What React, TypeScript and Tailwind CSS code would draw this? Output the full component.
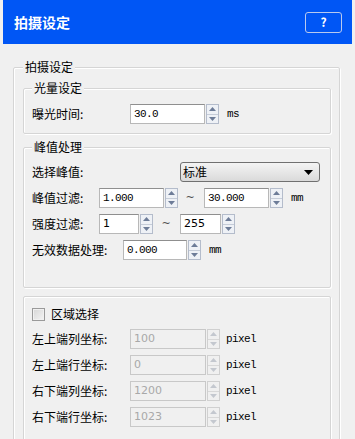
import type { ReactNode } from 'react';

const cjk = "font-['Noto_Sans_CJK_SC','Microsoft_YaHei',sans-serif]";

function Spinner({ disabled }: { disabled?: boolean }) {
  const arrow = disabled ? 'fill-[#c4c8cf]' : 'fill-[#6d7c98]';
  return (
    <div
      className={`ml-px flex h-[20px] w-[13px] flex-col border ${
        disabled ? 'border-[#d0d0d0] bg-[#f0f0f0]' : 'border-[#b4bccb] bg-[#eef1f6]'
      }`}
    >
      <div className="flex flex-1 items-center justify-center">
        <svg width="7" height="4" viewBox="0 0 7 4">
          <path d="M0 4 L3.5 0 L7 4 Z" className={arrow} />
        </svg>
      </div>
      <div className={`h-px ${disabled ? 'bg-[#d8d8d8]' : 'bg-[#c5ccd8]'}`} />
      <div className="flex flex-1 items-center justify-center">
        <svg width="7" height="4" viewBox="0 0 7 4">
          <path d="M0 0 L7 0 L3.5 4 Z" className={arrow} />
        </svg>
      </div>
    </div>
  );
}

function SpinBox({
  w,
  value,
  disabled,
  mono,
}: {
  w: string;
  value: string;
  disabled?: boolean;
  mono?: boolean;
}) {
  return (
    <div className="flex items-center">
      <div
        className={`flex h-[20px] items-center border pl-[3px] ${w} ${
          disabled
            ? 'border-[#c8c8c8] bg-[#f0f0f0] text-[#a8a8a8]'
            : 'border-[#b8b8b8] border-t-[#8f8f8f] bg-white text-black'
        } ${
          mono
            ? "font-['Liberation_Mono',monospace] text-[11px] tracking-[-0.6px]"
            : "font-['DejaVu_Sans',sans-serif] text-[11px]"
        }`}
      >
        {value}
      </div>
      <Spinner disabled={disabled} />
    </div>
  );
}

function Row({ label, lw, children }: { label: string; lw: string; children: ReactNode }) {
  return (
    <div className="flex h-[26px] items-center">
      <span className={`${lw} shrink-0 text-[12px] leading-[14px] text-black`}>{label}</span>
      {children}
    </div>
  );
}

function Unit({ children, ml }: { children: ReactNode; ml: string }) {
  return (
    <span className={`${ml} font-['Liberation_Mono',monospace] text-[11px] tracking-[-0.6px] text-black`}>
      {children}
    </span>
  );
}

function Tilde({ cls }: { cls: string }) {
  return (
    <span className={`${cls} w-[12px] text-center font-['DejaVu_Sans',sans-serif] text-[11px] text-[#505050]`}>
      ~
    </span>
  );
}

function Group({ title, className, children }: { title?: string; className: string; children: ReactNode }) {
  return (
    <fieldset
      className={`rounded-[2px] border border-[#d5d5d5] shadow-[inset_1px_1px_0_0_#ffffff,1px_1px_0_0_#ffffff] ${className}`}
    >
      {title && (
        <legend className="bg-[#f0f0f0] px-[2px] text-[12px] leading-[14px] text-black">{title}</legend>
      )}
      {children}
    </fieldset>
  );
}

export default function App() {
  return (
    <div className={`h-[439px] w-[355px] overflow-hidden bg-[#f0f0f0] ${cjk}`}>
      {/* Title bar */}
      <div className="mx-[3px] flex h-[44px] items-center justify-between bg-[#0056f5] pl-[11px] pr-[10px]">
        <span className="text-[14px] font-bold text-white">拍摄设定</span>
        <button className="flex h-[21px] w-[37px] items-center justify-center rounded-[3px] border border-[#b9c9ee] text-[12px] font-bold text-white">
          ?
        </button>
      </div>

      <div className="pl-[13px] pt-[16px]">
        <Group title="拍摄设定" className="w-[327px] pl-[9px] pr-[8px] pt-[7px] pb-[10px]">
          {/* 光量设定 */}
          <Group title="光量设定" className="px-[8px] pt-[6px] pb-[6px]">
            <Row label="曝光时间:" lw="w-[98px]">
              <SpinBox w="w-[75px]" value="30.0" mono />
              <Unit ml="ml-[8px]">ms</Unit>
            </Row>
          </Group>

          {/* 峰值处理 */}
          <Group title="峰值处理" className="mt-[6px] px-[8px] pt-[5px] pb-[24px]">
            <Row label="选择峰值:" lw="w-[148px]">
              <div className="flex h-[20px] w-[140px] items-center justify-between rounded-[3px] border border-[#707070] bg-gradient-to-b from-[#f4f4f4] to-[#dadada] pl-[2px] pr-[6px]">
                <span className="text-[12px] leading-[14px] text-black">标准</span>
                <svg width="9" height="5" viewBox="0 0 9 5">
                  <path d="M0 0 L9 0 L4.5 5 Z" fill="#000" />
                </svg>
              </div>
            </Row>
            <Row label="峰值过滤:" lw="w-[67px]">
              <SpinBox w="w-[65px]" value="1.000" mono />
              <Tilde cls="ml-[6px] mr-[8px]" />
              <SpinBox w="w-[65px]" value="30.000" mono />
              <Unit ml="ml-[8px]">mm</Unit>
            </Row>
            <Row label="强度过滤:" lw="w-[67px]">
              <SpinBox w="w-[40px]" value="1" />
              <Tilde cls="ml-[7px] mr-[8px]" />
              <SpinBox w="w-[41px]" value="255" />
            </Row>
            <Row label="无效数据处理:" lw="w-[91px]">
              <SpinBox w="w-[64px]" value="0.000" mono />
              <Unit ml="ml-[8px]">mm</Unit>
            </Row>
          </Group>

          {/* 区域选择 */}
          <Group className="mt-[8px] px-[8px] pt-[5px] pb-[20px]">
            <div className="flex h-[24px] items-center">
              <span className="h-[13px] w-[13px] border border-[#9a9a9a] bg-gradient-to-br from-[#d6d6d6] to-[#f4f4f4] shadow-[inset_0_0_0_1px_#f0f0f0]" />
              <span className="ml-[6px] text-[12px] leading-[14px] text-black">区域选择</span>
            </div>
            {[
              ['左上端列坐标:', '100'],
              ['左上端行坐标:', '0'],
              ['右下端列坐标:', '1200'],
              ['右下端行坐标:', '1023'],
            ].map(([label, value]) => (
              <Row key={label} label={label} lw="w-[98px]">
                <SpinBox w="w-[76px]" value={value} disabled />
                <Unit ml="ml-[6px]">pixel</Unit>
              </Row>
            ))}
          </Group>
        </Group>
      </div>
    </div>
  );
}
